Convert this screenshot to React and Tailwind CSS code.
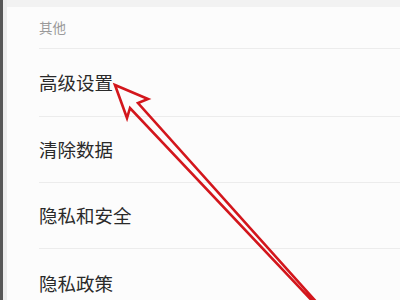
import React from 'react';

const items = [
  { label: '高级设置', h: 'h-[68px]' },
  { label: '清除数据', h: 'h-[66px]' },
  { label: '隐私和安全', h: 'h-[66px]' },
  { label: '隐私政策', h: 'h-[70px]' },
];

export default function App() {
  return (
    <div
      className="relative flex h-[300px] w-[400px] overflow-hidden bg-[#fcfcfc]"
      style={{ fontFamily: '"Noto Sans CJK SC", "Noto Sans", sans-serif' }}
    >
      {/* left edge of the frame */}
      <div className="w-[3px] shrink-0 bg-[#575757]" />
      <div className="w-[4px] shrink-0 bg-[#ededed]" />

      <div className="flex flex-1 flex-col">
        {/* top strip */}
        <div className="h-[7px] shrink-0 bg-[#f2f2f2]" />

        <div className="flex flex-col pl-[32px]">
          <div className="flex h-[42px] items-center border-b border-[#ececec] text-[13.5px] text-[#9a9a9a]">
            其他
          </div>
          {items.map((it) => (
            <div
              key={it.label}
              className={`flex ${it.h} items-center border-b border-[#ececec] text-[18.5px] text-[#2a2a2a]`}
            >
              {it.label}
            </div>
          ))}
        </div>
      </div>

      {/* red annotation arrow */}
      <svg
        className="pointer-events-none absolute left-0 top-0"
        width="400"
        height="300"
        viewBox="0 0 400 300"
      >
        <polygon
          points="115,85 148,99 138,103 320,306 317,306 130,108 127,118"
          fill="none"
          stroke="#d3161c"
          strokeWidth="2.6"
          strokeLinejoin="miter"
        />
      </svg>
    </div>
  );
}
